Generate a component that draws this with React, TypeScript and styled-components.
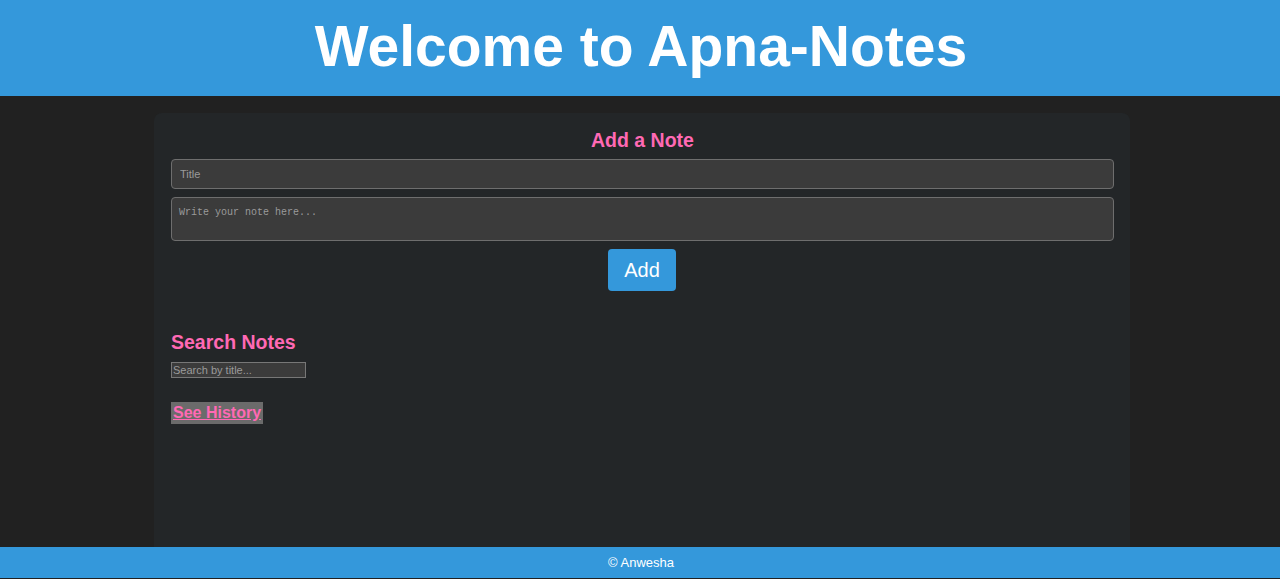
import React from "react";
import styled, { createGlobalStyle } from "styled-components";

const GlobalStyle = createGlobalStyle`
  html, body {
    margin: 0;
    padding: 0;
    background: #212121;
    font-family: "Liberation Sans", Arial, sans-serif;
  }
  * { box-sizing: border-box; }
`;

const Page = styled.div`
  min-height: 100vh;
  display: flex;
  flex-direction: column;
  padding-bottom: 1px;
  background: #212121;
`;

const Header = styled.header`
  height: 96px;
  background: #3498db;
  display: flex;
  align-items: center;
  justify-content: center;
  padding-left: 2px;
`;

const Title = styled.h1`
  margin: 0;
  color: #ffffff;
  font-size: 57px;
  font-weight: 700;
  line-height: 1;
  padding-bottom: 3px;
`;

const Main = styled.main`
  flex: 1;
  display: flex;
  justify-content: center;
  padding-top: 17px;
  padding-left: 4px;
`;

const Card = styled.section`
  width: 976px;
  background: #232628;
  border-radius: 8px 8px 0 0;
  padding: 16px 16px 16px 17px;
  display: flex;
  flex-direction: column;
`;

const Heading = styled.h2<{ $center?: boolean }>`
  margin: 0;
  color: #ff69b4;
  font-size: 19.5px;
  font-weight: 700;
  line-height: 22px;
  text-align: ${(p) => (p.$center ? "center" : "left")};
`;

const Form = styled.div`
  display: flex;
  flex-direction: column;
  gap: 8px;
  margin-top: 8px;
`;

const TextInput = styled.input`
  height: 30px;
  width: 100%;
  background: #3b3b3b;
  border: 1px solid #6e6e6e;
  border-radius: 4px;
  padding: 0 8px;
  color: #ddd;
  font-family: "Liberation Sans", Arial, sans-serif;
  font-size: 11px;
  outline: none;
  &::placeholder { color: #9a9a9a; }
`;

const NoteArea = styled.textarea`
  height: 44px;
  width: 100%;
  background: #3b3b3b;
  border: 1px solid #6e6e6e;
  border-radius: 4px;
  padding: 9px 7px;
  color: #ddd;
  font-family: "Liberation Mono", "DejaVu Sans Mono", monospace;
  font-size: 10px;
  resize: none;
  outline: none;
  &::placeholder { color: #9a9a9a; }
`;

const AddButton = styled.button`
  align-self: center;
  height: 42px;
  padding: 0 16px;
  margin-right: 1px;
  background: #3498db;
  color: #ffffff;
  border: none;
  border-radius: 4px;
  font-family: "Liberation Sans", Arial, sans-serif;
  font-size: 20px;
  cursor: pointer;
`;

const SearchSection = styled.div`
  margin-top: 40px;
  display: flex;
  flex-direction: column;
  align-items: flex-start;
`;

const SearchInput = styled.input`
  margin-top: 9px;
  width: 135px;
  height: 16px;
  background: #3b3b3b;
  border: 1px solid #777;
  padding: 0 1px;
  color: #ddd;
  font-family: "Liberation Sans", Arial, sans-serif;
  font-size: 11px;
  outline: none;
  &::placeholder { color: #9a9a9a; }
`;

const HistoryButton = styled.button`
  margin-top: 24px;
  height: 22px;
  padding: 0 2px;
  background: #6b6b6b;
  color: #ff69b4;
  border: none;
  font-family: "Liberation Sans", Arial, sans-serif;
  font-size: 16px;
  font-weight: 700;
  text-decoration: underline;
  cursor: pointer;
`;

const Footer = styled.footer`
  height: 31px;
  background: #3498db;
  color: #ffffff;
  font-size: 13px;
  display: flex;
  align-items: center;
  justify-content: center;
  padding-left: 2px;
`;

export default function App() {
  return (
    <>
      <GlobalStyle />
      <Page>
        <Header>
          <Title>Welcome to Apna-Notes</Title>
        </Header>
        <Main>
          <Card>
            <Heading $center>Add a Note</Heading>
            <Form>
              <TextInput placeholder="Title" />
              <NoteArea placeholder="Write your note here..." />
              <AddButton>Add</AddButton>
            </Form>
            <SearchSection>
              <Heading>Search Notes</Heading>
              <SearchInput placeholder="Search by title..." />
              <HistoryButton>See History</HistoryButton>
            </SearchSection>
          </Card>
        </Main>
        <Footer>© Anwesha</Footer>
      </Page>
    </>
  );
}
